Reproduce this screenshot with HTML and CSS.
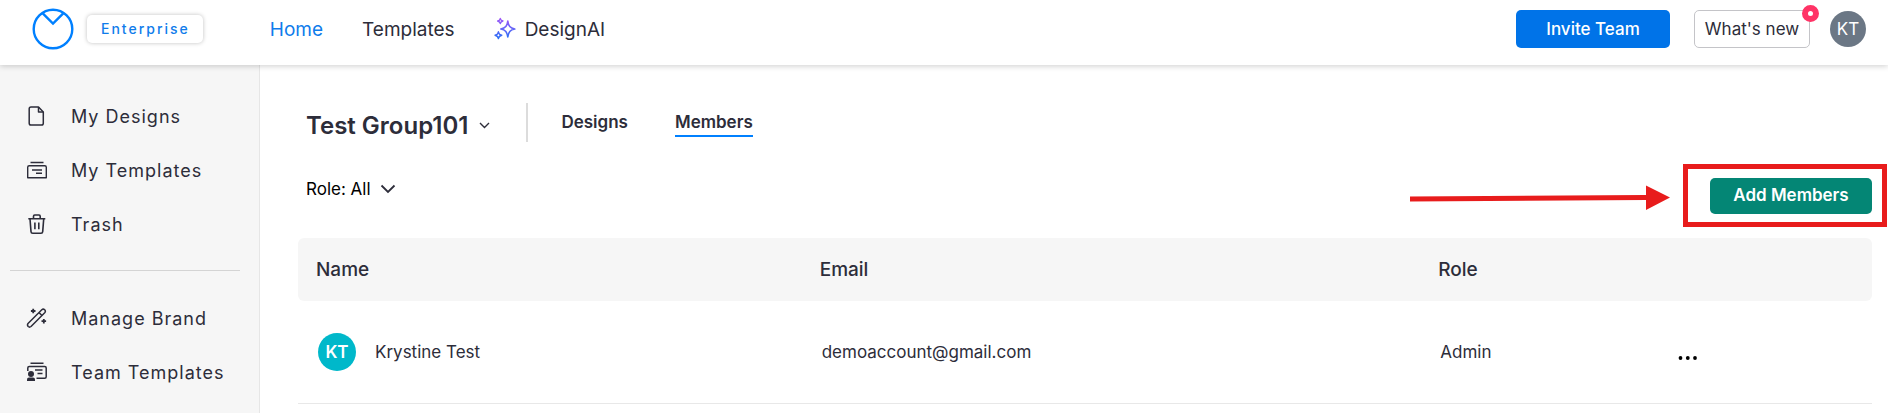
FILE: index.html
```html
<!DOCTYPE html>
<html lang="en">
<head>
    <meta charset="UTF-8">
    <meta name="viewport" content="width=device-width, initial-scale=1.0">
    <title>Members</title>
    <link rel="stylesheet" href="styles.css">
</head>
<body>

<header class="topbar">
    <a href="#" class="logo" aria-label="Dashboard">
        <svg width="42" height="42" viewBox="0 0 42 42" fill="none" stroke="#0080ff" stroke-width="2.4">
            <circle cx="21" cy="21" r="19.3"/>
            <path d="M10.5 5.2L21 15.6L31.5 5.2"/>
        </svg>
    </a>
    <span class="plan">Enterprise</span>

    <nav class="main-nav">
        <a href="#" class="active">Home</a>
        <a href="#">Templates</a>
        <a href="#" class="ai-link">
            <svg width="22" height="24" viewBox="0 0 22 24" fill="none" stroke="url(#aiGradient)" stroke-width="1.6" stroke-linejoin="round">
                <defs>
                    <linearGradient id="aiGradient" gradientUnits="userSpaceOnUse" x1="0" y1="0" x2="0" y2="24">
                        <stop offset="0" stop-color="#a855f7"/>
                        <stop offset="1" stop-color="#1b74f6"/>
                    </linearGradient>
                </defs>
                <path d="M13.8 4C14.5 9 16 11.2 20.8 12C16 12.8 14.5 15 13.8 20C13.1 15 11.6 12.8 6.8 12C11.6 11.2 13.1 9 13.8 4Z"/>
                <path d="M6.3 1.3C6.6 3 7.3 3.7 9 4C7.3 4.3 6.6 5 6.3 6.7C6 5 5.3 4.3 3.6 4C5.3 3.7 6 3 6.3 1.3Z" stroke-width="1.3"/>
                <path d="M4.4 14.8C4.8 17 5.6 17.8 7.8 18.2C5.6 18.6 4.8 19.4 4.4 21.6C4 19.4 3.2 18.6 1 18.2C3.2 17.8 4 17 4.4 14.8Z" stroke-width="1.4"/>
            </svg>
            DesignAI
        </a>
    </nav>

    <div class="actions">
        <button type="button" class="btn btn-invite">Invite Team</button>
        <button type="button" class="btn btn-news">What's new<span class="dot"></span></button>
        <button type="button" class="avatar avatar-user">KT</button>
    </div>
</header>

<div class="layout">
    <aside class="sidebar">
        <a href="#">
            <svg width="22" height="22" viewBox="0 0 22 22" fill="none" stroke="#2d2d3a" stroke-width="1.5" stroke-linejoin="round">
                <path d="M5 2H12.5L17.3 7V18.2Q17.3 20 15.5 20H5Q3.2 20 3.2 18.2V3.8Q3.2 2 5 2Z"/>
                <path d="M12.5 2V7H17.3"/>
            </svg>
            My Designs
        </a>
        <a href="#">
            <svg width="22" height="22" viewBox="0 0 22 22" fill="none" stroke="#2d2d3a" stroke-width="1.4" stroke-linejoin="round">
                <path d="M4.5 3.5H17.5M6 11H16M10 14.2H16"/>
                <path d="M1.7 18.7V8.2Q1.7 6.7 3.2 6.7H18.8Q20.3 6.7 20.3 8.2V18.7Z"/>
            </svg>
            My Templates
        </a>
        <a href="#">
            <svg width="22" height="22" viewBox="0 0 22 22" fill="none" stroke="#2d2d3a" stroke-width="1.6" stroke-linejoin="round">
                <path d="M2.3 5.7H19.3M7.5 5.5V3.2Q7.5 2 8.7 2H13Q14.2 2 14.2 3.2V5.5"/>
                <path d="M4 6L5 18.6Q5.1 20.2 6.7 20.2H15Q16.6 20.2 16.7 18.6L17.7 6M8.9 9.5V16.3M12.8 9.5V16.3"/>
            </svg>
            Trash
        </a>
        <hr>
        <a href="#">
            <svg width="22" height="22" viewBox="0 0 22 22" fill="none" stroke="#2d2d3a" stroke-width="1.5" stroke-linejoin="round">
                <path d="M2 16.5L15.8 2.8Q17.2 1.5 18.7 2.8Q20 4.2 18.7 5.7L5 19.5Q3.5 20.7 2.2 19.5Q.9 18 2 16.5Z"/>
                <path d="M13 5.6L16 8.5"/>
                <path d="M7.2 1.7V6.3M4.9 4H9.5M17.8 11.9V16.5M15.5 14.2H20.1" stroke-width="1.8"/>
            </svg>
            Manage Brand
        </a>
        <a href="#">
            <svg width="22" height="22" viewBox="0 0 22 22" fill="none" stroke="#2d2d3a" stroke-width="1.5" stroke-linejoin="round">
                <path d="M4.5 2.3H17.5M9 9H16.5M11.5 12.5H16.5"/>
                <path d="M1.8 10V7Q1.8 5.5 3.3 5.5H18.7Q20.2 5.5 20.2 7V15.7Q20.2 17.2 18.7 17.2H10.5"/>
                <circle cx="5" cy="13" r="3" fill="#2d2d3a" stroke="none"/>
                <path d="M1 20V18.3Q1 16.5 3 16.5H7Q9 16.5 9 18.3V20Z" fill="#2d2d3a" stroke="none"/>
            </svg>
            Team Templates
        </a>
    </aside>

    <main class="content">
        <div class="group-head">
            <button type="button" class="group-name">
                Test Group101
                <svg width="11" height="7" viewBox="0 0 11 7" fill="none" stroke="#2d2d3a" stroke-width="1.4"><path d="M1 1L5.5 5.5L10 1"/></svg>
            </button>
            <nav class="tabs">
                <a href="#">Designs</a>
                <a href="#" class="selected">Members</a>
            </nav>
        </div>

        <div class="toolbar">
            <button type="button" class="role-filter">
                Role: All
                <svg width="16" height="10" viewBox="0 0 16 10" fill="none" stroke="#2d2d3a" stroke-width="1.8"><path d="M1.5 1.5L8 8L14.5 1.5"/></svg>
            </button>
            <div class="add-wrap">
                <button type="button" class="btn btn-add">Add Members</button>
                <!-- callout -->
                <span class="highlight"></span>
                <svg class="arrow" width="260" height="26" viewBox="0 0 260 26" fill="#e81c1c">
                    <path d="M0 11.5L236 10V0.5L260 12.5L236 25V15L0 16.5Z"/>
                </svg>
            </div>
        </div>

        <table class="members">
            <colgroup>
                <col class="col-name">
                <col class="col-email">
                <col class="col-role">
                <col>
            </colgroup>
            <thead>
                <tr>
                    <th>Name</th>
                    <th>Email</th>
                    <th>Role</th>
                    <th></th>
                </tr>
            </thead>
            <tbody>
                <tr>
                    <td><div class="person"><span class="avatar avatar-member">KT</span>Krystine Test</div></td>
                    <td>demoaccount@gmail.com</td>
                    <td>Admin</td>
                    <td>
                        <button type="button" class="more" aria-label="More">
                            <svg width="20" height="4" viewBox="0 0 20 4"><circle cx="2.5" cy="2" r="1.9"/><circle cx="9.8" cy="2" r="1.9"/><circle cx="17" cy="2" r="1.9"/></svg>
                        </button>
                    </td>
                </tr>
            </tbody>
        </table>
    </main>
</div>

</body>
</html>
```
FILE: styles.css
```css
* {
    box-sizing: border-box;
    margin: 0;
    padding: 0;
}

body {
    font-family: Inter, sans-serif;
    font-size: 17px;
    color: #2d2d3a;
    background: #fff;
    min-height: 100vh;
    display: flex;
    flex-direction: column;
    overflow: hidden;
}

a {
    color: inherit;
    text-decoration: none;
}

button {
    font-family: inherit;
    color: inherit;
    background: none;
    border: none;
    cursor: pointer;
}

svg {
    display: block;
    flex-shrink: 0;
}

/* Top bar */
.topbar {
    position: relative;
    z-index: 2;
    display: flex;
    align-items: center;
    height: 65px;
    padding: 0 22px 7px 32px;
    background: #fff;
    box-shadow: 0 1px 6px rgba(0, 0, 0, 0.2);
}

.plan {
    margin-left: 13px;
    padding: 0 13px 0 14px;
    line-height: 28px;
    font-size: 14px;
    font-weight: 500;
    letter-spacing: 2px;
    color: #0f7ceb;
    border-radius: 5px;
    box-shadow: 0 0 4px rgba(0, 0, 0, 0.25);
}

.main-nav {
    display: flex;
    align-items: center;
    gap: 39px;
    margin-left: 67px;
    font-size: 19px;
}

.main-nav .active {
    color: #0f7ceb;
}

.ai-link {
    display: flex;
    align-items: center;
    gap: 9px;
}

.actions {
    display: flex;
    align-items: center;
    gap: 24px;
    margin-left: auto;
}

.btn {
    height: 38px;
    border-radius: 5px;
    font-size: 17px;
    font-weight: 600;
}

.btn-invite {
    width: 154px;
    color: #fff;
    background: #0073e8;
    font-weight: 500;
}

.btn-news {
    position: relative;
    width: 116px;
    border: 1px solid #c4c4c8;
    font-weight: 400;
}

.dot {
    position: absolute;
    top: -6px;
    right: -10px;
    width: 17px;
    height: 17px;
    border: 6px solid #ff3366;
    border-radius: 50%;
    background: #fff;
}

.avatar {
    display: flex;
    align-items: center;
    justify-content: center;
    border-radius: 50%;
    color: #fff;
}

.avatar-user {
    width: 36px;
    height: 36px;
    margin-left: -4px;
    font-size: 17px;
    background: #6b7785;
}

/* Sidebar */
.layout {
    display: flex;
    flex: 1;
}

.sidebar {
    width: 260px;
    flex-shrink: 0;
    padding: 24px 0;
    background: #f6f6f6;
    border-right: 1px solid #e6e6e6;
}

.sidebar a {
    display: flex;
    align-items: center;
    gap: 23px;
    height: 54px;
    padding-left: 26px;
    font-size: 18px;
    letter-spacing: 1px;
}

.sidebar hr {
    margin: 19px 19px 20px 10px;
    border: none;
    border-top: 1px solid #d4d4d4;
}

/* Content */
.content {
    flex: 1;
    padding: 38px 16px 0 38px;
}

.group-head {
    display: flex;
    height: 39px;
    padding-left: 8px;
}

.group-name {
    display: flex;
    align-items: center;
    gap: 11px;
    padding: 5px 36px 0 0;
    font-size: 24px;
    font-weight: 600;
}

.tabs {
    display: flex;
    align-items: flex-start;
    gap: 47px;
    padding: 7px 0 0 33px;
    border-left: 2px solid #dcdcdc;
    font-size: 17px;
    font-weight: 600;
    line-height: 25px;
}

.tabs .selected {
    border-bottom: 2px solid #0080ff;
}

.toolbar {
    display: flex;
    justify-content: space-between;
    align-items: flex-start;
    margin-top: 36px;
    padding-left: 8px;
}

.role-filter {
    display: flex;
    align-items: center;
    gap: 9px;
    height: 22px;
    font-size: 17px;
    color: #000;
}

.add-wrap {
    position: relative;
}

.btn-add {
    display: block;
    width: 162px;
    height: 36px;
    padding-bottom: 2px;
    color: #fff;
    background: #048675;
}

.highlight {
    position: absolute;
    top: -14px;
    right: -15px;
    bottom: -13px;
    left: -27px;
    border: 5px solid #e81c1c;
    pointer-events: none;
}

.arrow {
    position: absolute;
    top: 7px;
    right: 202px;
}

.members {
    width: 100%;
    margin-top: 24px;
    table-layout: fixed;
    border-collapse: separate;
    border-spacing: 0;
}

.col-name {
    width: 32%;
}

.col-email {
    width: 39.3%;
}

.col-role {
    width: 15.1%;
}

.members th {
    height: 63px;
    padding: 0 18px;
    text-align: left;
    font-size: 19px;
    font-weight: 500;
    background: #f6f6f6;
}

.members th:first-child {
    border-radius: 6px 0 0 6px;
}

.members th:last-child {
    border-radius: 0 6px 6px 0;
}

.members td {
    height: 103px;
    padding: 0 20px;
    border-bottom: 1px solid #e8e8e8;
}

.person {
    display: flex;
    align-items: center;
    gap: 19px;
}

.avatar-member {
    width: 38px;
    height: 38px;
    font-weight: 600;
    background: #00b8ca;
}

.more {
    display: block;
    padding-top: 12px;
}
```
